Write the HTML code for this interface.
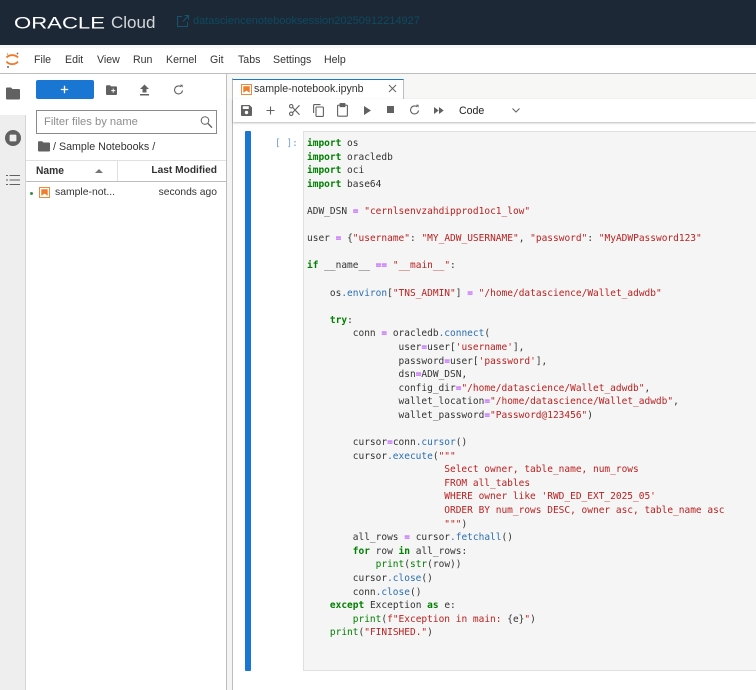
<!DOCTYPE html>
<html><head><meta charset="utf-8">
<style>
*{box-sizing:border-box}
html,body{margin:0;padding:0;width:756px;height:690px;overflow:hidden;background:#fff;font-family:"Liberation Sans",sans-serif;color:#212121}
.a{position:absolute}
.menu span{position:absolute;top:54px;font-size:10.6px;line-height:13px;color:#333}
pre{margin:0;font-family:"DejaVu Sans Mono",monospace;font-size:9.5px;line-height:13.6px;color:#333}
.k{color:#008000;font-weight:bold}.o{color:#a2f}.s{color:#ba2121}.p{color:#2a6fb0}.b{color:#008000}
svg{position:absolute;display:block}
</style></head><body>
<div class="a" style="left:0;top:0;width:756px;height:45px;background:#1c2836"></div>
<svg style="left:14px;top:15px" width="92" height="16" viewBox="0 0 92 16"><text x="0" y="13.5" font-family="Liberation Sans" font-size="17" fill="#fff" textLength="91" lengthAdjust="spacingAndGlyphs">ORACLE</text></svg>
<div class="a" style="left:111px;top:13px;font-size:17px;line-height:20px;color:#d5d8db">Cloud</div>
<svg style="left:176px;top:14px" width="14" height="14" viewBox="0 0 14 14" fill="none" stroke="#14566d" stroke-width="1"><path d="M6 2.5H1.5V12.5H11.5V8"/><path d="M7 7.5L12.5 1.5M8.5 1.5H12.5V5.5"/></svg>
<div class="a" style="left:193px;top:14px;font-size:11px;line-height:14px;color:#0d4a60;white-space:nowrap">datasciencenotebooksession20250912214927</div>

<div class="a" style="left:0;top:45px;width:756px;height:3px;background:#f7f7f7"></div>
<svg style="left:5px;top:51px" width="15" height="18" viewBox="0 0 15 18" fill="none"><path d="M1.5 6.5C4 3.4 10.5 3.4 13 6.5" stroke="#f37726" stroke-width="1.8"/><path d="M1.5 10.5C4 14 10.5 14 13 10.5" stroke="#f37726" stroke-width="1.8"/><circle cx="12.5" cy="2.5" r=".9" fill="#666"/><circle cx="3" cy="16" r="1" fill="#666"/><circle cx="2.5" cy="3" r=".6" fill="#888"/></svg>
<div class="menu">
<span style="left:34px">File</span><span style="left:65px">Edit</span><span style="left:97px">View</span><span style="left:133px">Run</span><span style="left:166px">Kernel</span><span style="left:210px">Git</span><span style="left:238px">Tabs</span><span style="left:273px">Settings</span><span style="left:324px">Help</span>
</div>
<div class="a" style="left:0;top:73px;width:756px;height:1px;background:#bdbdbd"></div>

<div class="a" style="left:0;top:74px;width:26px;height:616px;background:#eee"></div>
<div class="a" style="left:0;top:74px;width:26px;height:41px;background:#fff"></div>
<div class="a" style="left:25px;top:115px;width:1px;height:575px;background:#d5d5d5"></div>
<svg style="left:6px;top:87px" width="14" height="13" viewBox="0 0 14 13"><path d="M0 1.5Q0 .5 1 .5H5L6.5 2H13Q14 2 14 3V11.5Q14 12.5 13 12.5H1Q0 12.5 0 11.5Z" fill="#616161"/></svg>
<svg style="left:5px;top:130px" width="16" height="16" viewBox="0 0 16 16"><circle cx="8" cy="8" r="8" fill="#616161"/><rect x="4.6" y="4.6" width="6.8" height="6.8" rx="1" fill="#eee"/></svg>
<svg style="left:6px;top:174px" width="14" height="12" viewBox="0 0 14 12" fill="none" stroke="#616161"><path d="M3.5 1.5H14M3.5 6H14M3.5 10.5H14"/><path d="M0 1.5H2M0 6H2M0 10.5H2"/></svg>

<div class="a" style="left:36px;top:80px;width:58px;height:19px;background:#1976d2;border-radius:2px"></div>
<svg style="left:60px;top:85px" width="9" height="9" viewBox="0 0 9 9"><path d="M4.5 .8V8.2M.8 4.5H8.2" stroke="#fff" stroke-width="1.3"/></svg>
<svg style="left:106px;top:85px" width="11" height="10" viewBox="0 0 11 10"><path d="M0 1Q0 .2 1 .2H4L5.2 1.4H10Q11 1.4 11 2.4V9Q11 10 10 10H1Q0 10 0 9Z" fill="#616161"/><path d="M7.2 3.6V7.6M5.2 5.6H9.2" stroke="#fff"/></svg>
<svg style="left:139px;top:84px" width="11" height="12" viewBox="0 0 11 12"><path d="M5.5 .5L10 5H7.5V8.5H3.5V5H1Z M1 10H10V11.5H1Z" fill="#616161"/></svg>
<svg style="left:173px;top:84px" width="11" height="12" viewBox="0 0 11 12" fill="none" stroke="#616161" stroke-width="1.1"><path d="M9.5 6.5A4 4 0 1 1 8 2.8"/><path d="M6.8 .8H9.6V3.6Z" fill="#616161" stroke="none"/></svg>

<div class="a" style="left:36px;top:110px;width:181px;height:24px;border:1px solid #8a8a8a;background:#fff"></div>
<div class="a" style="left:44px;top:115px;font-size:11.2px;line-height:14px;color:#8d8d8d">Filter files by name</div>
<svg style="left:200px;top:115px" width="13" height="14" viewBox="0 0 13 14" fill="none" stroke="#616161" stroke-width="1"><circle cx="5" cy="5.5" r="3.8"/><path d="M8 8.5L12 12.7" stroke-width="1.3"/></svg>

<svg style="left:38px;top:141px" width="12" height="11" viewBox="0 0 12 11"><path d="M0 1Q0 .2 1 .2H4.2L5.5 1.5H11Q12 1.5 12 2.5V9.5Q12 10.5 11 10.5H1Q0 10.5 0 9.5Z" fill="#616161"/></svg>
<div class="a" style="left:53px;top:140px;font-size:10.7px;line-height:14px;color:#333;white-space:nowrap">/ Sample Notebooks /</div>

<div class="a" style="left:26px;top:160px;width:200px;height:1px;background:#e0e0e0"></div>
<div class="a" style="left:26px;top:181px;width:200px;height:1px;background:#bdbdbd"></div>
<div class="a" style="left:117px;top:161px;width:1px;height:20px;background:#e0e0e0"></div>
<div class="a" style="left:36px;top:164px;font-size:10.6px;line-height:14px;font-weight:bold;color:#333;transform:scaleX(.97);transform-origin:0 0">Name</div>
<svg style="left:95px;top:169px" width="8" height="4" viewBox="0 0 8 4"><path d="M4 0L8 4H0Z" fill="#757575"/></svg>
<div class="a" style="right:539px;top:164px;font-size:10.2px;line-height:14px;font-weight:bold;color:#333;white-space:nowrap">Last Modified</div>

<div class="a" style="left:30px;top:192px;width:3px;height:3px;border-radius:50%;background:#388e3c"></div>
<svg style="left:39px;top:187px" width="11" height="11" viewBox="0 0 11 11"><rect x=".5" y=".5" width="10" height="10" fill="#fff" stroke="#ef8a3c"/><path d="M2.3 2.3H8.7V8.7L5.5 6.6L2.3 8.7Z" fill="#ef7d2a"/></svg>
<div class="a" style="left:55px;top:186px;font-size:10.4px;line-height:14px;color:#333;white-space:nowrap">sample-not...</div>
<div class="a" style="right:539px;top:186px;font-size:10.3px;line-height:14px;color:#333;white-space:nowrap">seconds ago</div>

<div class="a" style="left:226px;top:74px;width:1px;height:616px;background:#bdbdbd"></div>
<div class="a" style="left:227px;top:74px;width:529px;height:25px;background:#f7f7f5"></div>
<div class="a" style="left:227px;top:99px;width:5px;height:591px;background:#f4f4f2"></div>
<div class="a" style="left:232px;top:78px;width:1px;height:612px;background:#bdbdbd"></div>

<div class="a" style="left:232px;top:79px;width:172px;height:21px;background:#fff;border:1px solid #bdbdbd;border-bottom:0;border-top:1px solid #1976d2"></div>
<svg style="left:241px;top:84px" width="11" height="11" viewBox="0 0 11 11"><rect x=".5" y=".5" width="10" height="10" fill="#fff" stroke="#ef8a3c"/><path d="M2.3 2.3H8.7V8.7L5.5 6.6L2.3 8.7Z" fill="#ef7d2a"/></svg>
<div class="a" style="left:254px;top:82px;font-size:10.6px;line-height:14px;color:#333;white-space:nowrap">sample-notebook.ipynb</div>
<svg style="left:388px;top:84px" width="9" height="9" viewBox="0 0 9 9"><path d="M1 1L8 8M8 1L1 8" stroke="#616161" stroke-width="1"/></svg>

<div class="a" style="left:233px;top:99px;width:523px;height:23px;background:#fff;box-shadow:0 1px 2px rgba(0,0,0,.28)"></div>
<svg style="left:241px;top:105px" width="11" height="11" viewBox="0 0 11 11"><path d="M1 0H8.5L11 2.5V10Q11 11 10 11H1Q0 11 0 10V1Q0 0 1 0Z" fill="#616161"/><rect x="1.8" y="1.2" width="6" height="2.8" fill="#fff"/><circle cx="5.5" cy="7.5" r="1.7" fill="#fff"/></svg>
<svg style="left:266px;top:106px" width="9" height="9" viewBox="0 0 9 9"><path d="M4.5 .5V8.5M.5 4.5H8.5" stroke="#616161" stroke-width="1.1"/></svg>
<svg style="left:289px;top:104px" width="11" height="12" viewBox="0 0 11 12" fill="none" stroke="#616161" stroke-width="1.1"><circle cx="2.2" cy="2.2" r="1.7"/><circle cx="2.2" cy="9.8" r="1.7"/><path d="M3.5 3.2L10.5 10.8M3.5 8.8L10.5 1.2"/></svg>
<svg style="left:313px;top:104px" width="11" height="13" viewBox="0 0 11 13" fill="none" stroke="#616161" stroke-width="1.1"><path d="M7.5 .6H1.5Q.6 .6 .6 1.5V9"/><rect x="3" y="3" width="7.4" height="9.4" rx=".8"/></svg>
<svg style="left:337px;top:103px" width="11" height="14" viewBox="0 0 11 14" fill="none" stroke="#616161" stroke-width="1.1"><rect x=".6" y="2.2" width="9.8" height="11" rx=".8"/><rect x="3.2" y=".6" width="4.6" height="3" fill="#616161"/></svg>
<svg style="left:364px;top:106px" width="7" height="9" viewBox="0 0 7 9"><path d="M0 0L7 4.5L0 9Z" fill="#616161"/></svg>
<div class="a" style="left:387px;top:106px;width:7px;height:7px;background:#616161"></div>
<svg style="left:409px;top:104px" width="11" height="12" viewBox="0 0 11 12" fill="none" stroke="#616161" stroke-width="1.1"><path d="M9.5 6.5A4 4 0 1 1 8 2.8"/><path d="M6.8 .8H9.6V3.6Z" fill="#616161" stroke="none"/></svg>
<svg style="left:434px;top:107px" width="10" height="7" viewBox="0 0 10 7"><path d="M0 0L4.7 3.5L0 7ZM5 0L9.7 3.5L5 7Z" fill="#616161"/></svg>
<div class="a" style="left:459px;top:104px;font-size:10.6px;line-height:14px;color:#212121">Code</div>
<svg style="left:512px;top:108px" width="8" height="5" viewBox="0 0 8 5" fill="none"><path d="M.5 .5L4 4L7.5 .5" stroke="#616161"/></svg>

<div class="a" style="left:245px;top:131px;width:6px;height:540px;background:#1976d2;border-radius:1px"></div>
<div class="a" style="left:275px;top:137px;font-family:'DejaVu Sans Mono',monospace;font-size:9.5px;line-height:13px;color:#6f9ed6;white-space:pre">[ ]:</div>
<div class="a" style="left:303px;top:131px;width:453px;height:540px;background:#f5f5f5;border:1px solid #e0e0e0;border-right:0"></div>
<pre class="a" style="left:307px;top:137px"><span class="k">import</span> os
<span class="k">import</span> oracledb
<span class="k">import</span> oci
<span class="k">import</span> base64

ADW_DSN <span class="o">=</span> <span class="s">"cernlsenvzahdipprod1oc1_low"</span>

user <span class="o">=</span> {<span class="s">"username"</span>: <span class="s">"MY_ADW_USERNAME"</span>, <span class="s">"password"</span>: <span class="s">"MyADWPassword123"</span>

<span class="k">if</span> __name__ <span class="o">==</span> <span class="s">"__main__"</span>:

    os<span class="p">.environ</span>[<span class="s">"TNS_ADMIN"</span>] <span class="o">=</span> <span class="s">"/home/datascience/Wallet_adwdb"</span>

    <span class="k">try</span>:
        conn <span class="o">=</span> oracledb<span class="p">.connect</span>(
                user<span class="o">=</span>user[<span class="s">'username'</span>],
                password<span class="o">=</span>user[<span class="s">'password'</span>],
                dsn<span class="o">=</span>ADW_DSN,
                config_dir<span class="o">=</span><span class="s">"/home/datascience/Wallet_adwdb"</span>,
                wallet_location<span class="o">=</span><span class="s">"/home/datascience/Wallet_adwdb"</span>,
                wallet_password<span class="o">=</span><span class="s">"Password@123456"</span>)

        cursor<span class="o">=</span>conn<span class="p">.cursor</span>()
        cursor<span class="p">.execute</span>(<span class="s">"""</span>
<span class="s">                        Select owner, table_name, num_rows</span>
<span class="s">                        FROM all_tables</span>
<span class="s">                        WHERE owner like 'RWD_ED_EXT_2025_05'</span>
<span class="s">                        ORDER BY num_rows DESC, owner asc, table_name asc</span>
<span class="s">                        """</span>)
        all_rows <span class="o">=</span> cursor<span class="p">.fetchall</span>()
        <span class="k">for</span> row <span class="k">in</span> all_rows:
            <span class="b">print</span>(<span class="b">str</span>(row))
        cursor<span class="p">.close</span>()
        conn<span class="p">.close</span>()
    <span class="k">except</span> Exception <span class="k">as</span> e:
        <span class="b">print</span>(<span class="s">f"Exception in main: </span>{e}<span class="s">"</span>)
    <span class="b">print</span>(<span class="s">"FINISHED."</span>)</pre>
</body></html>
